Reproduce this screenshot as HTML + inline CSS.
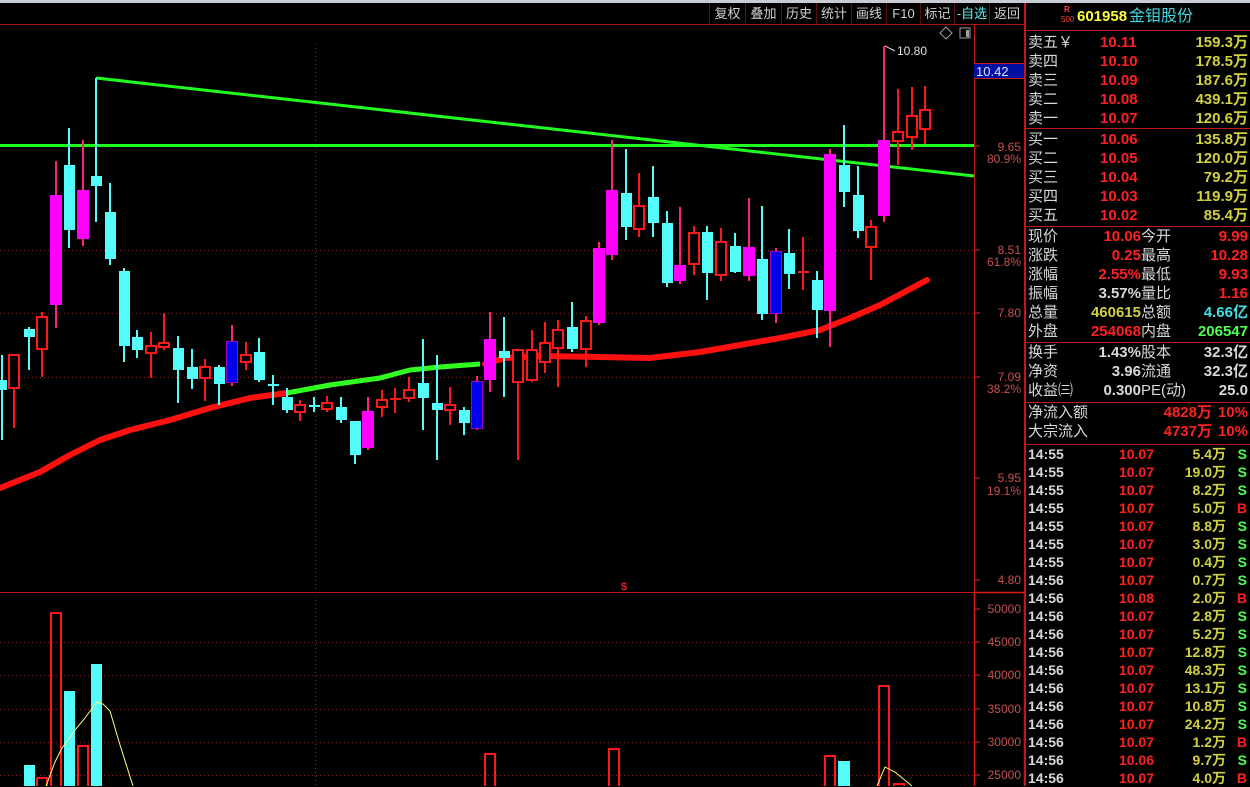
<!DOCTYPE html>
<html><head><meta charset="utf-8">
<style>
*{margin:0;padding:0;box-sizing:border-box}
body{width:1250px;height:786px;background:#000;overflow:hidden;position:relative;font-family:"Liberation Sans","Noto Sans CJK SC",sans-serif}
.a{position:absolute;white-space:nowrap}
.tb{position:absolute;top:3px;height:21px;color:#d0d0d0;font-size:13px;line-height:21px;text-align:center;border-left:1px solid #5a1010}
.r{position:absolute;left:1025px;width:225px;height:19px;font-size:15px;line-height:19px}
.r span{position:absolute;top:0}
.w{color:#d8d8d8}.red{color:#ff2020;font-weight:bold}.yel{color:#d0d040;font-weight:bold}.cy{color:#40e0e0}.gr{color:#50ff50;font-weight:bold}
.ax{position:absolute;right:1250px;font-size:12px;color:#c85050;text-align:right}
.t{position:absolute;left:1025px;width:225px;height:18px;font-size:14px;line-height:18px;font-weight:bold}
.t span{position:absolute;top:0}
</style></head><body>
<div class="a" style="left:0;top:0;width:1250px;height:3px;background:#c8ccd4"></div>

<svg class="a" style="left:0;top:0" width="1025" height="786">
<line x1="0" y1="24.5" x2="1025" y2="24.5" stroke="#a01818"/>
<line x1="974.5" y1="24" x2="974.5" y2="786" stroke="#c01818"/>
<line x1="0" y1="592.5" x2="974" y2="592.5" stroke="#c01818"/>
<rect x="974.5" y="592.5" width="50" height="200" fill="none" stroke="#e01818" stroke-width="1.5"/>
<g stroke="#8a2020" stroke-dasharray="1,3">
<line x1="315.5" y1="44" x2="315.5" y2="786"/>
<line x1="0" y1="250.5" x2="974" y2="250.5"/>
<line x1="0" y1="313.5" x2="974" y2="313.5"/>
<line x1="0" y1="377.5" x2="974" y2="377.5"/>
<line x1="0" y1="642.5" x2="974" y2="642.5"/>
<line x1="0" y1="675.5" x2="974" y2="675.5"/>
<line x1="0" y1="709.5" x2="974" y2="709.5"/>
<line x1="0" y1="742.5" x2="974" y2="742.5"/>
<line x1="0" y1="775.5" x2="974" y2="775.5"/>
</g>
<!-- axis ticks -->
<g stroke="#c03030">
<line x1="975" y1="146" x2="980" y2="146"/><line x1="975" y1="250" x2="980" y2="250"/><line x1="975" y1="313" x2="980" y2="313"/><line x1="975" y1="377" x2="980" y2="377"/><line x1="975" y1="478" x2="980" y2="478"/><line x1="975" y1="580" x2="980" y2="580"/>
<line x1="975" y1="609" x2="980" y2="609"/><line x1="975" y1="642" x2="980" y2="642"/><line x1="975" y1="675" x2="980" y2="675"/><line x1="975" y1="709" x2="980" y2="709"/><line x1="975" y1="742" x2="980" y2="742"/><line x1="975" y1="775" x2="980" y2="775"/>
</g>
<!-- horizontal green line & trendline -->
<line x1="0" y1="145.5" x2="974" y2="145.5" stroke="#20ff20" stroke-width="3"/>
<line x1="96" y1="78" x2="974" y2="176" stroke="#20ff20" stroke-width="3"/>
<!-- MA line -->
<polyline fill="none" stroke="#ff1010" stroke-width="6" stroke-linecap="round" stroke-linejoin="round" points="0,488 40,472 70,455 100,440 130,430 170,420 210,408 250,398 287,393"/>
<polyline fill="none" stroke="#30ff20" stroke-width="5" stroke-linejoin="round" points="287,393 330,385 380,378 410,370 440,367 480,364"/>
<polyline fill="none" stroke="#ff1010" stroke-width="6" stroke-linecap="round" stroke-linejoin="round" points="485,364 505,358 540,356 600,357 650,358 700,352 740,345 780,338 820,330 850,318 880,305 927,280"/>
<!-- cyan candles -->
<g stroke="#54fcfc" stroke-width="2">
<line x1="2" y1="355" x2="2" y2="440"/><line x1="29" y1="327" x2="29" y2="370"/><line x1="69" y1="128" x2="69" y2="248"/><line x1="96" y1="78" x2="96" y2="222"/><line x1="110" y1="183" x2="110" y2="265"/><line x1="124" y1="268" x2="124" y2="362"/><line x1="137" y1="330" x2="137" y2="358"/><line x1="178" y1="336" x2="178" y2="403"/><line x1="192" y1="349" x2="192" y2="389"/><line x1="219" y1="365" x2="219" y2="405"/><line x1="259" y1="338" x2="259" y2="382"/><line x1="287" y1="388" x2="287" y2="413"/><line x1="341" y1="397" x2="341" y2="423"/><line x1="355" y1="421" x2="355" y2="464"/><line x1="423" y1="339" x2="423" y2="430"/><line x1="437" y1="355" x2="437" y2="460"/><line x1="464" y1="407" x2="464" y2="435"/><line x1="504" y1="317" x2="504" y2="397"/><line x1="572" y1="302" x2="572" y2="352"/><line x1="626" y1="149" x2="626" y2="240"/><line x1="653" y1="166" x2="653" y2="237"/><line x1="667" y1="211" x2="667" y2="287"/><line x1="707" y1="226" x2="707" y2="300"/><line x1="735" y1="233" x2="735" y2="273"/><line x1="762" y1="206" x2="762" y2="320"/><line x1="789" y1="229" x2="789" y2="289"/><line x1="817" y1="271" x2="817" y2="338"/><line x1="844" y1="125" x2="844" y2="207"/><line x1="858" y1="166" x2="858" y2="238"/>
<line x1="273" y1="375" x2="273" y2="405"/><line x1="268" y1="385" x2="279" y2="385"/><line x1="314" y1="397" x2="314" y2="412"/><line x1="309" y1="406" x2="320" y2="406"/>
</g>
<g fill="#54fcfc">
<rect x="-3" y="380" width="10" height="10"/><rect x="24" y="329" width="11" height="8"/><rect x="64" y="165" width="11" height="65"/><rect x="91" y="176" width="11" height="10"/><rect x="105" y="212" width="11" height="47"/><rect x="119" y="271" width="11" height="75"/><rect x="132" y="337" width="11" height="13"/><rect x="173" y="348" width="11" height="22"/><rect x="187" y="367" width="11" height="12"/><rect x="214" y="367" width="11" height="17"/><rect x="254" y="352" width="11" height="28"/><rect x="282" y="397" width="11" height="13"/><rect x="336" y="407" width="11" height="13"/><rect x="350" y="421" width="11" height="34"/><rect x="418" y="383" width="11" height="15"/><rect x="432" y="403" width="11" height="7"/><rect x="459" y="410" width="11" height="13"/><rect x="499" y="351" width="11" height="7"/><rect x="567" y="327" width="11" height="22"/><rect x="621" y="193" width="11" height="34"/><rect x="648" y="197" width="11" height="26"/><rect x="662" y="223" width="11" height="60"/><rect x="702" y="232" width="11" height="41"/><rect x="730" y="246" width="11" height="26"/><rect x="757" y="259" width="11" height="55"/><rect x="784" y="253" width="11" height="21"/><rect x="812" y="280" width="11" height="30"/><rect x="839" y="165" width="11" height="27"/><rect x="853" y="195" width="11" height="36"/>
</g>
<!-- red hollow -->
<g stroke="#ff1818" stroke-width="2">
<line x1="14" y1="355" x2="14" y2="428"/><line x1="42" y1="312" x2="42" y2="377"/><line x1="151" y1="332" x2="151" y2="378"/><line x1="164" y1="313" x2="164" y2="350"/><line x1="205" y1="359" x2="205" y2="401"/><line x1="246" y1="342" x2="246" y2="370"/><line x1="300" y1="400" x2="300" y2="421"/><line x1="327" y1="396" x2="327" y2="412"/><line x1="382" y1="390" x2="382" y2="417"/><line x1="409" y1="377" x2="409" y2="402"/><line x1="450" y1="387" x2="450" y2="425"/><line x1="518" y1="350" x2="518" y2="460"/><line x1="532" y1="330" x2="532" y2="382"/><line x1="545" y1="322" x2="545" y2="373"/><line x1="558" y1="320" x2="558" y2="387"/><line x1="586" y1="316" x2="586" y2="367"/><line x1="639" y1="173" x2="639" y2="237"/><line x1="694" y1="226" x2="694" y2="275"/><line x1="721" y1="228" x2="721" y2="281"/><line x1="871" y1="220" x2="871" y2="280"/><line x1="898" y1="89" x2="898" y2="165"/><line x1="912" y1="87" x2="912" y2="150"/><line x1="925" y1="86" x2="925" y2="144"/>
<line x1="395" y1="388" x2="395" y2="413"/><line x1="390" y1="399" x2="401" y2="399"/><line x1="803" y1="237" x2="803" y2="290"/><line x1="798" y1="272" x2="809" y2="272"/>
</g>
<g stroke="#ff1818" stroke-width="2" fill="#000">
<rect x="9" y="355" width="10" height="33"/><rect x="37" y="317" width="10" height="32"/><rect x="146" y="346" width="10" height="7"/><rect x="159" y="343" width="10" height="4"/><rect x="200" y="367" width="10" height="11"/><rect x="241" y="355" width="10" height="7"/><rect x="295" y="405" width="10" height="7"/><rect x="322" y="403" width="10" height="6"/><rect x="377" y="400" width="10" height="7"/><rect x="404" y="390" width="10" height="8"/><rect x="445" y="405" width="10" height="5"/><rect x="513" y="350" width="10" height="32"/><rect x="527" y="350" width="10" height="30"/><rect x="540" y="343" width="10" height="19"/><rect x="553" y="330" width="10" height="18"/><rect x="581" y="321" width="10" height="28"/><rect x="634" y="206" width="10" height="23"/><rect x="689" y="233" width="10" height="31"/><rect x="716" y="242" width="10" height="33"/><rect x="866" y="227" width="10" height="20"/><rect x="893" y="132" width="10" height="9"/><rect x="907" y="116" width="10" height="21"/><rect x="920" y="110" width="10" height="19"/>
</g>
<!-- magenta -->
<g stroke="#ff2080" stroke-width="2">
<line x1="56" y1="161" x2="56" y2="328"/><line x1="83" y1="140" x2="83" y2="246"/><line x1="368" y1="397" x2="368" y2="450"/><line x1="490" y1="312" x2="490" y2="392"/><line x1="599" y1="242" x2="599" y2="325"/><line x1="612" y1="140" x2="612" y2="260"/><line x1="680" y1="207" x2="680" y2="284"/><line x1="749" y1="198" x2="749" y2="281"/><line x1="830" y1="149" x2="830" y2="347"/><line x1="884" y1="46" x2="884" y2="222"/>
<line x1="232" y1="325" x2="232" y2="386"/><line x1="477" y1="376" x2="477" y2="430"/><line x1="776" y1="248" x2="776" y2="323"/>
</g>
<g fill="#ff00ff">
<rect x="50" y="195" width="12" height="110"/><rect x="77" y="190" width="12" height="49"/><rect x="362" y="411" width="12" height="37"/><rect x="484" y="339" width="12" height="41"/><rect x="593" y="248" width="12" height="75"/><rect x="606" y="190" width="12" height="65"/><rect x="674" y="265" width="12" height="16"/><rect x="743" y="247" width="12" height="29"/><rect x="824" y="154" width="12" height="157"/><rect x="878" y="140" width="12" height="76"/>
</g>
<g fill="#0000f0" stroke="#a000c0"><rect x="226.5" y="341.5" width="11" height="41"/><rect x="471.5" y="381.5" width="11" height="47"/><rect x="770.5" y="251.5" width="11" height="62"/></g>
<!-- 10.80 marker -->
<path d="M885 46 L891 49 L895 51" stroke="#e0e0e0" fill="none"/>
<text x="897" y="55" fill="#e0e0e0" font-size="12" font-family="Liberation Sans">10.80</text>
<path d="M946 27 L952 33 L946 39 L940 33 Z" stroke="#a0a0a0" fill="none"/>
<rect x="960" y="28" width="10" height="10" stroke="#a0a0a0" fill="none"/><rect x="966" y="30" width="3" height="7" fill="#a0a0a0"/>
<text x="621" y="590" fill="#e02020" font-size="11" font-weight="bold" font-family="Liberation Sans">$</text>
<!-- volume -->
<g fill="#54fcfc"><rect x="24" y="765" width="11" height="30"/><rect x="64" y="691" width="11" height="100"/><rect x="91" y="664" width="11" height="130"/><rect x="838" y="761" width="12" height="30"/></g>
<g stroke="#ff1818" stroke-width="2" fill="none"><rect x="37" y="778" width="10" height="20"/><rect x="51" y="613" width="10" height="180"/><rect x="78" y="746" width="10" height="50"/><rect x="485" y="754" width="10" height="40"/><rect x="609" y="749" width="10" height="40"/><rect x="825" y="756" width="10" height="40"/><rect x="879" y="686" width="10" height="110"/><rect x="894" y="784" width="10" height="10"/></g>
<polyline fill="none" stroke="#ffff80" points="46,786 55,762 62,748 75,730 85,718 97,702 103,704 110,711 120,745 133,786"/>
<polyline fill="none" stroke="#ffff80" points="877,786 885,767 895,772 912,786"/>
</svg>

<!-- axis labels -->
<div class="a" style="left:974px;top:63px;width:51px;height:16px;background:#0010a0;border-top:1px solid #c02020;border-bottom:1px solid #c02020;color:#e0e0ff;font-size:13px;line-height:15px;padding-left:2px">10.42</div>
<div class="a" style="left:974px;width:47px;text-align:right;color:#c85050;font-size:12px;line-height:12px">
<div class="a" style="right:0;top:141px">9.65</div><div class="a" style="right:0;top:153px">80.9%</div>
<div class="a" style="right:0;top:244px">8.51</div><div class="a" style="right:0;top:256px">61.8%</div>
<div class="a" style="right:0;top:307px">7.80</div>
<div class="a" style="right:0;top:371px">7.09</div><div class="a" style="right:0;top:383px">38.2%</div>
<div class="a" style="right:0;top:472px">5.95</div><div class="a" style="right:0;top:485px">19.1%</div>
<div class="a" style="right:0;top:574px">4.80</div>
<div class="a" style="right:0;top:603px">50000</div><div class="a" style="right:0;top:636px">45000</div><div class="a" style="right:0;top:669px">40000</div><div class="a" style="right:0;top:703px">35000</div><div class="a" style="right:0;top:736px">30000</div><div class="a" style="right:0;top:769px">25000</div>
</div>

<!-- toolbar -->
<div class="tb" style="left:709px;width:36px">复权</div>
<div class="tb" style="left:745px;width:36px">叠加</div>
<div class="tb" style="left:781px;width:35px">历史</div>
<div class="tb" style="left:816px;width:35px">统计</div>
<div class="tb" style="left:851px;width:35px">画线</div>
<div class="tb" style="left:886px;width:34px">F10</div>
<div class="tb" style="left:920px;width:34px">标记</div>
<div class="tb" style="left:954px;width:35px;color:#60f0f0">-自选</div>
<div class="tb" style="left:989px;width:36px;border-right:1px solid #5a1010">返回</div>

<!-- right panel -->
<div class="a" style="left:1024px;top:3px;width:2px;height:783px;background:#c01818"></div>
<div class="a" style="left:1025px;top:30px;width:225px;height:1px;background:#c01818"></div>
<div class="a" style="left:1025px;top:128px;width:225px;height:1px;background:#c01818"></div>
<div class="a" style="left:1025px;top:226px;width:225px;height:1px;background:#c01818"></div>
<div class="a" style="left:1025px;top:342px;width:225px;height:1px;background:#c01818"></div>
<div class="a" style="left:1025px;top:402px;width:225px;height:1px;background:#c01818"></div>
<div class="a" style="left:1025px;top:444px;width:225px;height:1px;background:#c01818"></div>

<div class="a" style="left:1064px;top:6px;color:#ff4040;font-size:8px;line-height:8px;font-weight:bold">R</div>
<div class="a" style="left:1061px;top:15px;color:#ff4040;font-size:8px;line-height:9px">500</div>
<div class="a" style="left:1077px;top:7px;color:#ffff40;font-size:15px;font-weight:bold;line-height:20px">601958</div>
<div class="a" style="left:1129px;top:6px;color:#40d8e0;font-size:16px;line-height:22px">金钼股份</div>

<div class="r" style="top:33px"><span class="w" style="left:3px">卖五￥</span><span class="red" style="left:75px">10.11</span><span class="yel" style="right:2px">159.3万</span></div>
<div class="r" style="top:52px"><span class="w" style="left:3px">卖四</span><span class="red" style="left:75px">10.10</span><span class="yel" style="right:2px">178.5万</span></div>
<div class="r" style="top:71px"><span class="w" style="left:3px">卖三</span><span class="red" style="left:75px">10.09</span><span class="yel" style="right:2px">187.6万</span></div>
<div class="r" style="top:90px"><span class="w" style="left:3px">卖二</span><span class="red" style="left:75px">10.08</span><span class="yel" style="right:2px">439.1万</span></div>
<div class="r" style="top:109px"><span class="w" style="left:3px">卖一</span><span class="red" style="left:75px">10.07</span><span class="yel" style="right:2px">120.6万</span></div>
<div class="r" style="top:130px"><span class="w" style="left:3px">买一</span><span class="red" style="left:75px">10.06</span><span class="yel" style="right:2px">135.8万</span></div>
<div class="r" style="top:149px"><span class="w" style="left:3px">买二</span><span class="red" style="left:75px">10.05</span><span class="yel" style="right:2px">120.0万</span></div>
<div class="r" style="top:168px"><span class="w" style="left:3px">买三</span><span class="red" style="left:75px">10.04</span><span class="yel" style="right:2px">79.2万</span></div>
<div class="r" style="top:187px"><span class="w" style="left:3px">买四</span><span class="red" style="left:75px">10.03</span><span class="yel" style="right:2px">119.9万</span></div>
<div class="r" style="top:206px"><span class="w" style="left:3px">买五</span><span class="red" style="left:75px">10.02</span><span class="yel" style="right:2px">85.4万</span></div>

<div class="r" style="top:227px"><span class="w" style="left:3px">现价</span><span class="red" style="right:109px">10.06</span><span class="w" style="left:116px">今开</span><span class="red" style="right:2px">9.99</span></div>
<div class="r" style="top:246px"><span class="w" style="left:3px">涨跌</span><span class="red" style="right:109px">0.25</span><span class="w" style="left:116px">最高</span><span class="red" style="right:2px">10.28</span></div>
<div class="r" style="top:265px"><span class="w" style="left:3px">涨幅</span><span class="red" style="right:109px">2.55%</span><span class="w" style="left:116px">最低</span><span class="red" style="right:2px">9.93</span></div>
<div class="r" style="top:284px"><span class="w" style="left:3px">振幅</span><span class="w" style="right:109px;font-weight:bold">3.57%</span><span class="w" style="left:116px">量比</span><span class="red" style="right:2px">1.16</span></div>
<div class="r" style="top:303px"><span class="w" style="left:3px">总量</span><span class="yel" style="right:109px">460615</span><span class="w" style="left:116px">总额</span><span class="cy" style="right:2px;font-weight:bold">4.66亿</span></div>
<div class="r" style="top:322px"><span class="w" style="left:3px">外盘</span><span class="red" style="right:109px">254068</span><span class="w" style="left:116px">内盘</span><span class="gr" style="right:2px">206547</span></div>

<div class="r" style="top:343px"><span class="w" style="left:3px">换手</span><span class="w" style="right:109px;font-weight:bold">1.43%</span><span class="w" style="left:116px">股本</span><span class="w" style="right:2px;font-weight:bold">32.3亿</span></div>
<div class="r" style="top:362px"><span class="w" style="left:3px">净资</span><span class="w" style="right:109px;font-weight:bold">3.96</span><span class="w" style="left:116px">流通</span><span class="w" style="right:2px;font-weight:bold">32.3亿</span></div>
<div class="r" style="top:381px"><span class="w" style="left:3px">收益㈢</span><span class="w" style="right:109px;font-weight:bold">0.300</span><span class="w" style="left:116px">PE(动)</span><span class="w" style="right:2px;font-weight:bold">25.0</span></div>

<div class="r" style="top:403px"><span class="w" style="left:3px">净流入额</span><span class="red" style="right:38px">4828万</span><span class="red" style="right:2px">10%</span></div>
<div class="r" style="top:422px"><span class="w" style="left:3px">大宗流入</span><span class="red" style="right:38px">4737万</span><span class="red" style="right:2px">10%</span></div>

<div class="t" style="top:445px"><span class="w" style="left:3px">14:55</span><span class="red" style="right:96px">10.07</span><span class="yel" style="right:24px">5.4万</span><span class="gr" style="right:3px">S</span></div>
<div class="t" style="top:463px"><span class="w" style="left:3px">14:55</span><span class="red" style="right:96px">10.07</span><span class="yel" style="right:24px">19.0万</span><span class="gr" style="right:3px">S</span></div>
<div class="t" style="top:481px"><span class="w" style="left:3px">14:55</span><span class="red" style="right:96px">10.07</span><span class="yel" style="right:24px">8.2万</span><span class="gr" style="right:3px">S</span></div>
<div class="t" style="top:499px"><span class="w" style="left:3px">14:55</span><span class="red" style="right:96px">10.07</span><span class="yel" style="right:24px">5.0万</span><span class="red" style="right:3px">B</span></div>
<div class="t" style="top:517px"><span class="w" style="left:3px">14:55</span><span class="red" style="right:96px">10.07</span><span class="yel" style="right:24px">8.8万</span><span class="gr" style="right:3px">S</span></div>
<div class="t" style="top:535px"><span class="w" style="left:3px">14:55</span><span class="red" style="right:96px">10.07</span><span class="yel" style="right:24px">3.0万</span><span class="gr" style="right:3px">S</span></div>
<div class="t" style="top:553px"><span class="w" style="left:3px">14:55</span><span class="red" style="right:96px">10.07</span><span class="yel" style="right:24px">0.4万</span><span class="gr" style="right:3px">S</span></div>
<div class="t" style="top:571px"><span class="w" style="left:3px">14:56</span><span class="red" style="right:96px">10.07</span><span class="yel" style="right:24px">0.7万</span><span class="gr" style="right:3px">S</span></div>
<div class="t" style="top:589px"><span class="w" style="left:3px">14:56</span><span class="red" style="right:96px">10.08</span><span class="yel" style="right:24px">2.0万</span><span class="red" style="right:3px">B</span></div>
<div class="t" style="top:607px"><span class="w" style="left:3px">14:56</span><span class="red" style="right:96px">10.07</span><span class="yel" style="right:24px">2.8万</span><span class="gr" style="right:3px">S</span></div>
<div class="t" style="top:625px"><span class="w" style="left:3px">14:56</span><span class="red" style="right:96px">10.07</span><span class="yel" style="right:24px">5.2万</span><span class="gr" style="right:3px">S</span></div>
<div class="t" style="top:643px"><span class="w" style="left:3px">14:56</span><span class="red" style="right:96px">10.07</span><span class="yel" style="right:24px">12.8万</span><span class="gr" style="right:3px">S</span></div>
<div class="t" style="top:661px"><span class="w" style="left:3px">14:56</span><span class="red" style="right:96px">10.07</span><span class="yel" style="right:24px">48.3万</span><span class="gr" style="right:3px">S</span></div>
<div class="t" style="top:679px"><span class="w" style="left:3px">14:56</span><span class="red" style="right:96px">10.07</span><span class="yel" style="right:24px">13.1万</span><span class="gr" style="right:3px">S</span></div>
<div class="t" style="top:697px"><span class="w" style="left:3px">14:56</span><span class="red" style="right:96px">10.07</span><span class="yel" style="right:24px">10.8万</span><span class="gr" style="right:3px">S</span></div>
<div class="t" style="top:715px"><span class="w" style="left:3px">14:56</span><span class="red" style="right:96px">10.07</span><span class="yel" style="right:24px">24.2万</span><span class="gr" style="right:3px">S</span></div>
<div class="t" style="top:733px"><span class="w" style="left:3px">14:56</span><span class="red" style="right:96px">10.07</span><span class="yel" style="right:24px">1.2万</span><span class="red" style="right:3px">B</span></div>
<div class="t" style="top:751px"><span class="w" style="left:3px">14:56</span><span class="red" style="right:96px">10.06</span><span class="yel" style="right:24px">9.7万</span><span class="gr" style="right:3px">S</span></div>
<div class="t" style="top:769px"><span class="w" style="left:3px">14:56</span><span class="red" style="right:96px">10.07</span><span class="yel" style="right:24px">4.0万</span><span class="red" style="right:3px">B</span></div>
</body></html>
